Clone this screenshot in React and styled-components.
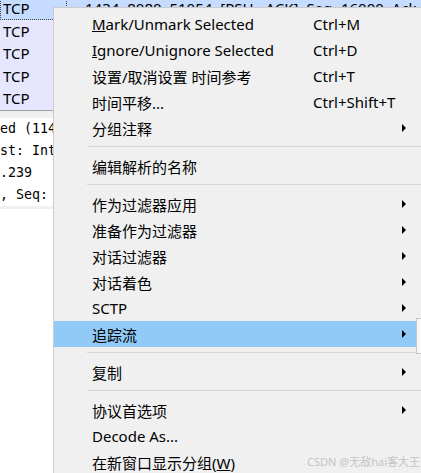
import styled, { createGlobalStyle } from "styled-components";

const GlobalStyle = createGlobalStyle`
  html, body {
    margin: 0;
    padding: 0;
    background: #fff;
    overflow: hidden;
  }
  body {
    font-family: "Noto Sans", "Noto Sans CJK SC", sans-serif;
  }
`;

const Screen = styled.div`
  position: relative;
  width: 421px;
  height: 473px;
  overflow: hidden;
  background: #fff;
`;

const PacketList = styled.div`
  margin-top: -3px;
  border-bottom: 1px solid #a0a0a0;
`;

const PacketRow = styled.div`
  display: flex;
  align-items: center;
  height: 22.5px;
  background: ${(p) => (p.$selected ? "#c5dbff" : "#e7e6ff")};
  font-size: 15px;
  color: #000;
  white-space: nowrap;
`;

const ProtoCell = styled.div`
  display: flex;
  align-items: center;
  flex: 0 0 67px;
  box-sizing: border-box;
  height: 100%;
  padding-left: 3px;
  outline: ${(p) => (p.$focused ? "1px dotted #444" : "none")};
  outline-offset: -1px;
`;

const InfoCell = styled.div`
  padding-left: 18px;
  word-spacing: 4px;
`;

const Splitter = styled.div`
  height: ${(p) => p.$h || 7}px;
  background: #f0f0f0;
`;

const DetailTree = styled.div`
  font-family: "DejaVu Sans Mono", "Liberation Mono", monospace;
  font-size: 13.3px;
  color: #000;
`;

const DetailRow = styled.div`
  display: flex;
  align-items: center;
  height: 22px;
  white-space: nowrap;
`;

const Menu = styled.div`
  position: absolute;
  left: 53px;
  top: 7px;
  width: 420px;
  box-sizing: border-box;
  padding: 3px 0;
  background: #f0f0f0;
  border: 1px solid #cccccc;
  font-family: "Noto Sans", "Noto Sans CJK SC", sans-serif;
  font-size: 15px;
  color: #000;
`;

const MenuItem = styled.div`
  display: grid;
  grid-template-columns: 221px 89px 4px;
  align-items: center;
  height: 26px;
  padding-left: 38px;
  margin-right: 3px;
  background: ${(p) => (p.$active ? "#91c9f7" : "transparent")};
  white-space: nowrap;
`;

const Shortcut = styled.span`
  white-space: nowrap;
`;

const Arrow = styled.span`
  width: 0;
  height: 0;
  border-left: 4px solid #000;
  border-top: 4px solid transparent;
  border-bottom: 4px solid transparent;
`;

const Separator = styled.div`
  height: 1px;
  margin: 5px 0 6px 33px;
  background: #d7d7d7;
`;

const SubmenuEdge = styled.div`
  position: absolute;
  left: 416px;
  top: 318px;
  width: 40px;
  height: 34px;
  background: #f7f7f7;
  border: 1px solid #c8c8c8;
`;

const Watermark = styled.div`
  position: absolute;
  right: 1px;
  bottom: 4px;
  font-family: "Noto Sans", "Noto Sans CJK SC", sans-serif;
  font-size: 11px;
  color: #c4c4c4;
  white-space: nowrap;
`;

const packets = [
  "1434 8080 51054 [PSH, ACK] Seq=16000 Ack=1 Win=512 Len=1080",
  "51054 8080 [ACK] Seq=1 Ack=17080 Win=1024 Len=0",
  "1434 8080 51054 [PSH, ACK] Seq=17080 Ack=1 Win=512 Len=1080",
  "51054 8080 [ACK] Seq=1 Ack=18160 Win=1024 Len=0",
  "1434 8080 51054 [PSH, ACK] Seq=18160 Ack=1 Win=512 Len=1080",
];

const details = [
  "ed (1144 bits), 143 bytes captured (1144 bits) on interface",
  "st: Intel_3c:0b:2f (a4:bb:6d:3c:0b:2f)",
  ".239",
  ", Seq: 16000, Ack: 1, Len: 1080",
];

const menu = [
  { label: "&Mark/Unmark Selected", shortcut: "Ctrl+M" },
  { label: "&Ignore/Unignore Selected", shortcut: "Ctrl+D" },
  { label: "设置/取消设置 时间参考", shortcut: "Ctrl+T" },
  { label: "时间平移...", shortcut: "Ctrl+Shift+T" },
  { label: "分组注释", sub: true },
  { sep: true },
  { label: "编辑解析的名称" },
  { sep: true },
  { label: "作为过滤器应用", sub: true },
  { label: "准备作为过滤器", sub: true },
  { label: "对话过滤器", sub: true },
  { label: "对话着色", sub: true },
  { label: "SCTP", sub: true },
  { label: "追踪流", sub: true, active: true },
  { sep: true },
  { label: "复制", sub: true },
  { sep: true },
  { label: "协议首选项", sub: true },
  { label: "Decode As..." },
  { label: "在新窗口显示分组(&W)" },
];

// Qt-style "&" marks the mnemonic letter
function Label({ text }) {
  const i = text.indexOf("&");
  if (i < 0) return <span>{text}</span>;
  return (
    <span>
      {text.slice(0, i)}
      <u>{text[i + 1]}</u>
      {text.slice(i + 2)}
    </span>
  );
}

export default function App() {
  return (
    <Screen>
      <GlobalStyle />
      <PacketList>
        {packets.map((info, i) => (
          <PacketRow key={i} $selected={i === 0}>
            <ProtoCell $focused={i === 0}>TCP</ProtoCell>
            <InfoCell>{info}</InfoCell>
          </PacketRow>
        ))}
      </PacketList>
      <Splitter />
      <DetailTree>
        {details.map((line, i) => (
          <DetailRow key={i}>{line}</DetailRow>
        ))}
      </DetailTree>
      <Splitter $h={3} />

      <Menu>
        {menu.map((item, i) =>
          item.sep ? (
            <Separator key={i} />
          ) : (
            <MenuItem key={i} $active={item.active}>
              <Label text={item.label} />
              <Shortcut>{item.shortcut}</Shortcut>
              {item.sub ? <Arrow /> : <span />}
            </MenuItem>
          )
        )}
      </Menu>
      <SubmenuEdge />
      <Watermark>CSDN @无敌hai客大王</Watermark>
    </Screen>
  );
}
